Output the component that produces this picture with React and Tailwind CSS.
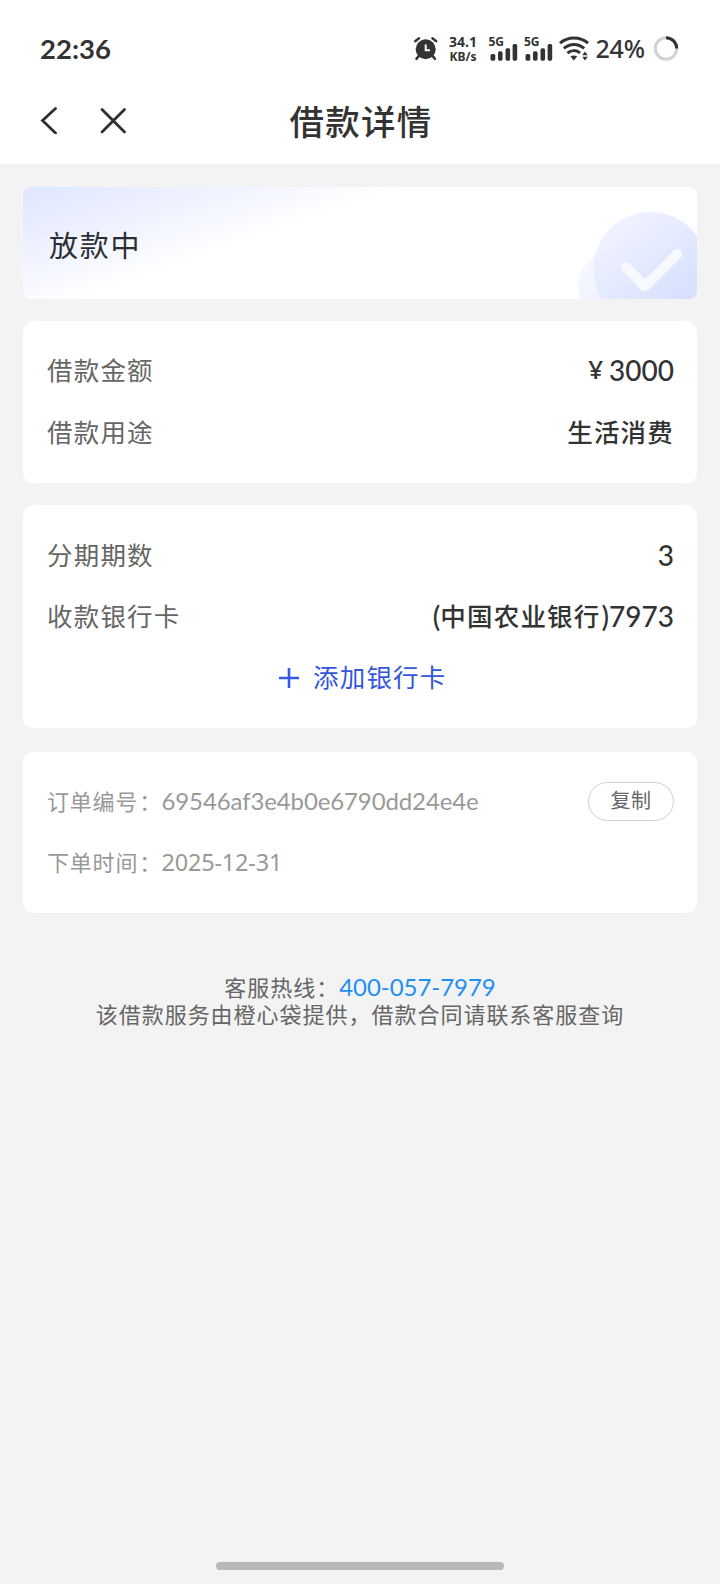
import React from "react";

const FONT_CJK = "font-['Noto_Sans_CJK_SC',sans-serif]";
const FONT_NUM = "font-['Lato','Noto_Sans_CJK_SC',sans-serif]";
const FONT_PLAIN = "font-['Noto_Sans','Noto_Sans_CJK_SC',sans-serif]";

function AlarmIcon() {
  return (
    <svg width="26" height="26" viewBox="0 0 26 26" fill="none" stroke="#333" strokeLinecap="round" aria-hidden="true">
      <circle cx="12.7" cy="14.2" r="10" fill="#333" stroke="none" />
      <path d="M2.2 6.2L6 3.2M23.2 6.2L19.4 3.2" strokeWidth="2.4" />
      <path d="M6.2 20.5L3.5 23.8M19.2 20.5L21.9 23.8" strokeWidth="2.6" />
      <path d="M12.7 9.5V15.2H17" stroke="#fff" strokeWidth="2" strokeLinecap="butt" />
    </svg>
  );
}

function Signal() {
  return (
    <div className="relative w-[28px] h-[26px] shrink-0">
      <span className="absolute -left-[1px] top-0 text-[12px] leading-[10px] font-bold font-['Noto_Sans',sans-serif]">5G</span>
      <svg className="absolute left-0 top-0" width="28" height="26" viewBox="0 0 28 26" fill="#333" aria-hidden="true">
        <rect x="0.5" y="17" width="4.8" height="6.7" rx="1.6" />
        <rect x="8" y="14.3" width="4.6" height="9.4" rx="1.6" />
        <rect x="15.5" y="11.2" width="4.6" height="12.5" rx="1.6" />
        <rect x="22.6" y="7.1" width="4.6" height="16.6" rx="1.6" />
      </svg>
    </div>
  );
}

function WifiIcon() {
  return (
    <svg width="30" height="26" viewBox="0 0 30 26" fill="none" stroke="#333" strokeWidth="3" aria-hidden="true">
      <path d="M1 7.2C9 .3 21 .3 29 7.2" />
      <path d="M4.8 12.4C11 7.2 19 7.2 25.2 12.4" />
      <path d="M8.5 17.2C12 13.8 17.5 13.8 21 17" />
      <path d="M11.4 20.6C13.4 19 16.2 19 18.2 20.6L14.8 24.6Z" fill="#333" stroke="none" />
      <path d="M23.2 19.2L26 15.6L28.8 19.2ZM23.2 20.8L26 24.4L28.8 20.8Z" fill="#333" stroke="none" />
    </svg>
  );
}

function BatteryRing() {
  return (
    <svg width="26" height="26" viewBox="0 0 26 26" fill="none" strokeWidth="3" aria-hidden="true">
      <circle cx="13" cy="13.5" r="10.7" stroke="#d2d2d2" />
      <path d="M13 2.8A10.7 10.7 0 0 1 23.7 13.5" stroke="#333" />
    </svg>
  );
}

function StatusBar() {
  return (
    <div className="h-[80px] pt-[35px] pl-[40px] flex items-start text-[#333]">
      <span className={`${FONT_NUM} w-[373px] text-[27.5px] leading-[27px] font-bold`}>22:36</span>
      <AlarmIcon />
      <div className="ml-[8px] w-[32px] font-['Noto_Sans',sans-serif] font-bold text-center text-[14px] leading-[14px] whitespace-nowrap">
        34.1
        <br />
        <span className="text-[12px]">KB/s</span>
      </div>
      <div className="ml-[10.5px] mt-[2px] flex gap-[7.5px]">
        <Signal />
        <Signal />
      </div>
      <div className="ml-[6px] mt-[1px]"><WifiIcon /></div>
      <span className="ml-[6.5px] w-[50px] text-[25px] leading-[27px] font-medium tracking-[-0.2px] whitespace-nowrap font-['Noto_Sans',sans-serif]">24%</span>
      <div className="ml-[7px]"><BatteryRing /></div>
    </div>
  );
}

function NavBar() {
  return (
    <div className="relative h-[84px] flex justify-center">
      <div className="absolute left-[38px] top-[26px] flex gap-[33.5px]">
        <svg width="28" height="28" viewBox="0 0 28 28" fill="none" stroke="#2f2f2f" strokeWidth="2.8" strokeLinecap="round" aria-hidden="true">
          <path d="M17.5 2.5L4.5 14.5L17.5 27" />
        </svg>
        <svg width="28" height="28" viewBox="0 0 28 28" fill="none" stroke="#2f2f2f" strokeWidth="2.8" strokeLinecap="round" aria-hidden="true">
          <path d="M2 3.5L24.5 26M24.5 3.5L2 26" />
        </svg>
      </div>
      <h1 className={`${FONT_CJK} mt-[20px] pl-[2px] text-[34.5px] leading-[40px] tracking-[1.3px] font-medium text-[#333]`}>借款详情</h1>
    </div>
  );
}

function StatusBanner() {
  return (
    <div className="relative h-[112px] rounded-lg overflow-hidden bg-white bg-[linear-gradient(161deg,#dfe6ff_0%,#edf1ff_18%,#ffffff_38%)] pl-[26px] pt-[2px] flex items-center">
      <span className={`${FONT_CJK} text-[29px] leading-[36px] tracking-[1.8px] text-[#2c2e35]`}>放款中</span>
      <svg className="absolute right-0 top-0" width="120" height="112" viewBox="0 0 120 112" fill="none" aria-hidden="true">
        <defs>
          <linearGradient id="disc" x1="0.15" y1="0.1" x2="0.75" y2="0.85">
            <stop offset="0" stopColor="#f0f3ff" />
            <stop offset="1" stopColor="#d6dfff" />
          </linearGradient>
          <linearGradient id="discBack" x1="0" y1="0" x2="0.7" y2="1">
            <stop offset="0" stopColor="#fafbff" />
            <stop offset="1" stopColor="#e9eeff" />
          </linearGradient>
        </defs>
        <circle cx="36" cy="99" r="35" fill="url(#discBack)" />
        <circle cx="73.5" cy="82" r="57" fill="url(#disc)" />
        <path d="M49.2 80L67.8 99.5L100.2 67" stroke="#f7f9ff" strokeWidth="10" strokeLinecap="round" strokeLinejoin="round" />
      </svg>
    </div>
  );
}

function Row({ label, children }) {
  return (
    <div className="h-[61.5px] flex items-center justify-between">
      <span className={`${FONT_CJK} text-[25.5px] leading-[36px] tracking-[1.2px] text-[#666]`}>{label}</span>
      <span className={`${FONT_CJK} text-[25.5px] leading-[36px] font-medium text-[#333] flex items-center`}>{children}</span>
    </div>
  );
}

function Num({ children }) {
  return <span className={`${FONT_NUM} pt-[2px] -mr-px text-[28px] leading-[36px] font-medium`}>{children}</span>;
}

export default function App() {
  return (
    <div className="w-[720px] h-[1584px] bg-[#f3f3f3] flex flex-col overflow-hidden">
      <header className="bg-white h-[164px] shrink-0">
        <StatusBar />
        <NavBar />
      </header>

      <main className="flex-1 px-[23px] pt-[23px]">
        <StatusBanner />

        <section className="mt-[22px] h-[162px] rounded-[10px] bg-white px-[24px] pt-[17.4px]">
          <Row label="借款金额">
            <span className={`${FONT_PLAIN} text-[26px] mr-[6px]`}>¥</span>
            <Num>3000</Num>
          </Row>
          <Row label="借款用途"><span className="tracking-[1.2px] -mr-[1px]">生活消费</span></Row>
        </section>

        <section className="mt-[22px] h-[223px] rounded-[10px] bg-white px-[24px] pt-[18px]">
          <Row label="分期期数"><Num>3</Num></Row>
          <Row label="收款银行卡">
            <Num>(</Num>
            <span className="tracking-[1.2px] ml-[1px] mr-[1px]">中国农业银行</span>
            <Num>)7973</Num>
          </Row>
          <button type="button" className="w-full h-[61.5px] pl-[5px] flex items-center justify-center gap-[12.5px] text-[#3456dc]">
            <svg className="mt-[2px]" width="22" height="22" viewBox="0 0 22 22" stroke="#3457ea" strokeWidth="2.6" aria-hidden="true">
              <path d="M11 1V21M1 11H21" />
            </svg>
            <span className={`${FONT_CJK} -mt-[1px] text-[25.5px] leading-[36px] tracking-[1.2px]`}>添加银行卡</span>
          </button>
        </section>

        <section className="mt-[24px] h-[161px] rounded-[10px] bg-white pl-[24px] pr-[23px] pt-[18px] text-[#999]">
          <div className="h-[61.5px] flex items-center">
            <span className={`${FONT_CJK} w-[114.5px] pb-[2px] text-[22px] leading-[30px] tracking-[0.8px] whitespace-nowrap`}>订单编号<span className="ml-[1px]">：</span></span>
            <span className={`${FONT_NUM} text-[24px] leading-[30px] tracking-[-0.12px]`}>69546af3e4b0e6790dd24e4e</span>
            <button type="button" className={`${FONT_CJK} ml-auto mt-[2px] w-[86px] h-[39px] pb-[4px] rounded-full border border-[#d0d0d0] text-[20px] leading-[33px] tracking-[0.6px] text-[#666]`}>复制</button>
          </div>
          <div className="h-[61.5px] flex items-center">
            <span className={`${FONT_CJK} w-[114.5px] pb-[2px] text-[22px] leading-[30px] tracking-[0.8px] whitespace-nowrap`}>下单时间<span className="ml-[1px]">：</span></span>
            <span className="font-['Noto_Sans',sans-serif] text-[23.5px] leading-[30px] tracking-[-0.2px]">2025-12-31</span>
          </div>
        </section>

        <footer className="mt-[61px]">
          <p className={`${FONT_NUM} text-center text-[22px] leading-[27px] tracking-[0.98px] text-[#666]`}>
            客服热线：<a className="text-[24px] leading-[24px] tracking-[-0.05px] text-[#1f8ef5]">400-057-7979</a>
            <br />
            该借款服务由橙心袋提供，借款合同请联系客服查询
          </p>
        </footer>
      </main>

      <div className="mx-auto mb-[14px] w-[288px] h-[8px] rounded-full bg-[#b8b8b8]" />
    </div>
  );
}
